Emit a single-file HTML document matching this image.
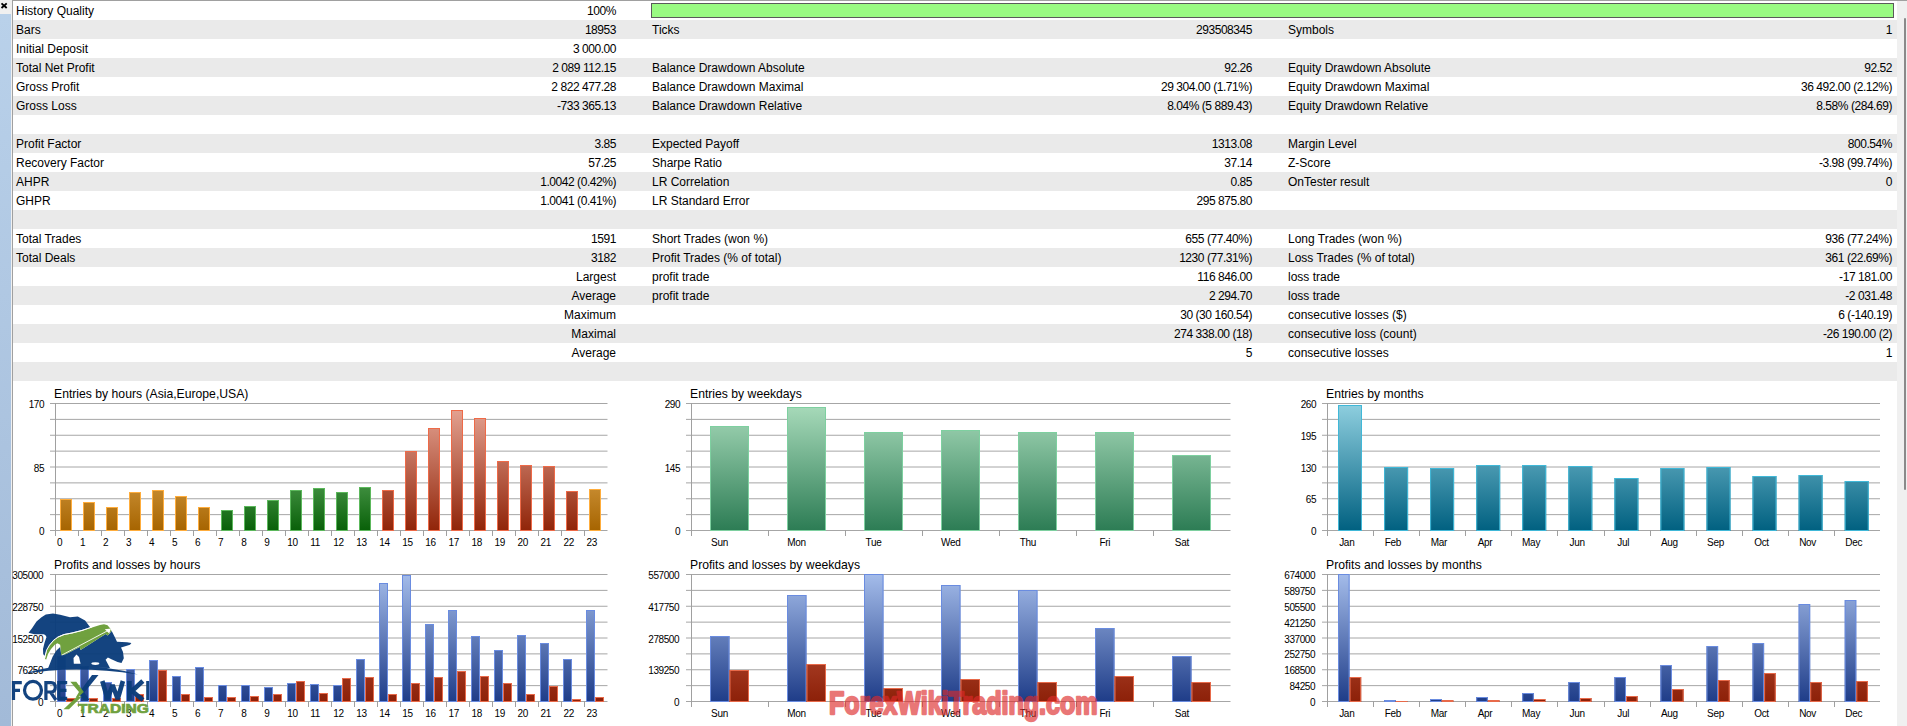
<!DOCTYPE html>
<html><head><meta charset="utf-8">
<style>
html,body{margin:0;padding:0;}
body{width:1907px;height:726px;overflow:hidden;position:relative;background:#f0f0f0;font-family:"Liberation Sans", sans-serif;}
.a{position:absolute;}
.r{position:absolute;left:13px;width:1884px;height:19px;}
.t{position:absolute;font-size:12px;line-height:19px;top:1px;white-space:nowrap;color:#000;}
.v{text-align:right;letter-spacing:-0.45px;}
</style></head><body>

<div class="a" style="left:0;top:14px;width:11px;height:712px;background:linear-gradient(#b9d1ea,#a2bad8)"></div>
<svg class="a" style="left:0;top:0" width="11" height="14"><path d="M1.5 3.4 L6.7 8 M6.7 3.4 L1.5 8" stroke="#000" stroke-width="1.9"/></svg>
<div class="a" style="left:12px;top:0;width:1895px;height:1px;background:#a0a0a0"></div>
<div class="a" style="left:12px;top:0;width:1px;height:726px;background:#a0a0a0"></div>
<div class="a" style="left:13px;top:1px;width:1884px;height:725px;background:#fff"></div>
<div class="a" style="left:1904px;top:18px;width:2px;height:472px;background:#8a8a8a;border-radius:1px"></div>
<div class="r" style="top:1px;background:#fff">
<span class="t" style="left:3px">History Quality</span>
<span class="t v" style="right:1281px">100%</span>
</div>
<div class="r" style="top:20px;background:#eaeaea">
<span class="t" style="left:3px">Bars</span>
<span class="t v" style="right:1281px">18953</span>
<span class="t" style="left:639px">Ticks</span>
<span class="t v" style="right:645px">293508345</span>
<span class="t" style="left:1275px">Symbols</span>
<span class="t v" style="right:5px">1</span>
</div>
<div class="r" style="top:39px;background:#fff">
<span class="t" style="left:3px">Initial Deposit</span>
<span class="t v" style="right:1281px">3 000.00</span>
</div>
<div class="r" style="top:58px;background:#eaeaea">
<span class="t" style="left:3px">Total Net Profit</span>
<span class="t v" style="right:1281px">2 089 112.15</span>
<span class="t" style="left:639px">Balance Drawdown Absolute</span>
<span class="t v" style="right:645px">92.26</span>
<span class="t" style="left:1275px">Equity Drawdown Absolute</span>
<span class="t v" style="right:5px">92.52</span>
</div>
<div class="r" style="top:77px;background:#fff">
<span class="t" style="left:3px">Gross Profit</span>
<span class="t v" style="right:1281px">2 822 477.28</span>
<span class="t" style="left:639px">Balance Drawdown Maximal</span>
<span class="t v" style="right:645px">29 304.00 (1.71%)</span>
<span class="t" style="left:1275px">Equity Drawdown Maximal</span>
<span class="t v" style="right:5px">36 492.00 (2.12%)</span>
</div>
<div class="r" style="top:96px;background:#eaeaea">
<span class="t" style="left:3px">Gross Loss</span>
<span class="t v" style="right:1281px">-733 365.13</span>
<span class="t" style="left:639px">Balance Drawdown Relative</span>
<span class="t v" style="right:645px">8.04% (5 889.43)</span>
<span class="t" style="left:1275px">Equity Drawdown Relative</span>
<span class="t v" style="right:5px">8.58% (284.69)</span>
</div>
<div class="r" style="top:115px;background:#fff">
</div>
<div class="r" style="top:134px;background:#eaeaea">
<span class="t" style="left:3px">Profit Factor</span>
<span class="t v" style="right:1281px">3.85</span>
<span class="t" style="left:639px">Expected Payoff</span>
<span class="t v" style="right:645px">1313.08</span>
<span class="t" style="left:1275px">Margin Level</span>
<span class="t v" style="right:5px">800.54%</span>
</div>
<div class="r" style="top:153px;background:#fff">
<span class="t" style="left:3px">Recovery Factor</span>
<span class="t v" style="right:1281px">57.25</span>
<span class="t" style="left:639px">Sharpe Ratio</span>
<span class="t v" style="right:645px">37.14</span>
<span class="t" style="left:1275px">Z-Score</span>
<span class="t v" style="right:5px">-3.98 (99.74%)</span>
</div>
<div class="r" style="top:172px;background:#eaeaea">
<span class="t" style="left:3px">AHPR</span>
<span class="t v" style="right:1281px">1.0042 (0.42%)</span>
<span class="t" style="left:639px">LR Correlation</span>
<span class="t v" style="right:645px">0.85</span>
<span class="t" style="left:1275px">OnTester result</span>
<span class="t v" style="right:5px">0</span>
</div>
<div class="r" style="top:191px;background:#fff">
<span class="t" style="left:3px">GHPR</span>
<span class="t v" style="right:1281px">1.0041 (0.41%)</span>
<span class="t" style="left:639px">LR Standard Error</span>
<span class="t v" style="right:645px">295 875.80</span>
</div>
<div class="r" style="top:210px;background:#eaeaea">
</div>
<div class="r" style="top:229px;background:#fff">
<span class="t" style="left:3px">Total Trades</span>
<span class="t v" style="right:1281px">1591</span>
<span class="t" style="left:639px">Short Trades (won %)</span>
<span class="t v" style="right:645px">655 (77.40%)</span>
<span class="t" style="left:1275px">Long Trades (won %)</span>
<span class="t v" style="right:5px">936 (77.24%)</span>
</div>
<div class="r" style="top:248px;background:#eaeaea">
<span class="t" style="left:3px">Total Deals</span>
<span class="t v" style="right:1281px">3182</span>
<span class="t" style="left:639px">Profit Trades (% of total)</span>
<span class="t v" style="right:645px">1230 (77.31%)</span>
<span class="t" style="left:1275px">Loss Trades (% of total)</span>
<span class="t v" style="right:5px">361 (22.69%)</span>
</div>
<div class="r" style="top:267px;background:#fff">
<span class="t v" style="right:1281px;letter-spacing:0">Largest</span>
<span class="t" style="left:639px">profit trade</span>
<span class="t v" style="right:645px">116 846.00</span>
<span class="t" style="left:1275px">loss trade</span>
<span class="t v" style="right:5px">-17 181.00</span>
</div>
<div class="r" style="top:286px;background:#eaeaea">
<span class="t v" style="right:1281px;letter-spacing:0">Average</span>
<span class="t" style="left:639px">profit trade</span>
<span class="t v" style="right:645px">2 294.70</span>
<span class="t" style="left:1275px">loss trade</span>
<span class="t v" style="right:5px">-2 031.48</span>
</div>
<div class="r" style="top:305px;background:#fff">
<span class="t v" style="right:1281px;letter-spacing:0">Maximum</span>
<span class="t v" style="right:645px">30 (30 160.54)</span>
<span class="t" style="left:1275px">consecutive losses ($)</span>
<span class="t v" style="right:5px">6 (-140.19)</span>
</div>
<div class="r" style="top:324px;background:#eaeaea">
<span class="t v" style="right:1281px;letter-spacing:0">Maximal</span>
<span class="t v" style="right:645px">274 338.00 (18)</span>
<span class="t" style="left:1275px">consecutive loss (count)</span>
<span class="t v" style="right:5px">-26 190.00 (2)</span>
</div>
<div class="r" style="top:343px;background:#fff">
<span class="t v" style="right:1281px;letter-spacing:0">Average</span>
<span class="t v" style="right:645px">5</span>
<span class="t" style="left:1275px">consecutive losses</span>
<span class="t v" style="right:5px">1</span>
</div>
<div class="r" style="top:362px;background:#eaeaea">
</div>
<div class="a" style="left:651px;top:3px;width:1241px;height:13px;background:#99fa82;border:1px solid #5a5a5a"></div>
<svg class="a" style="left:0;top:0" width="1907" height="726">
<defs>
<linearGradient id="gOr" gradientUnits="userSpaceOnUse" x1="0" y1="403" x2="0" y2="531"><stop offset="0" stop-color="#e0a860"/><stop offset="0.68" stop-color="#c4882c"/><stop offset="1" stop-color="#a66400"/></linearGradient>
<linearGradient id="gGr" gradientUnits="userSpaceOnUse" x1="0" y1="403" x2="0" y2="531"><stop offset="0" stop-color="#70b070"/><stop offset="0.68" stop-color="#3a8a3a"/><stop offset="1" stop-color="#086008"/></linearGradient>
<linearGradient id="gRd" gradientUnits="userSpaceOnUse" x1="0" y1="403" x2="0" y2="531"><stop offset="0" stop-color="#e8a898"/><stop offset="1" stop-color="#902408"/></linearGradient>
<linearGradient id="gTl" gradientUnits="userSpaceOnUse" x1="0" y1="403" x2="0" y2="531"><stop offset="0" stop-color="#aadcbc"/><stop offset="1" stop-color="#2c7c54"/></linearGradient>
<linearGradient id="gCy" gradientUnits="userSpaceOnUse" x1="0" y1="403" x2="0" y2="531"><stop offset="0" stop-color="#90d0e0"/><stop offset="1" stop-color="#006080"/></linearGradient>
<linearGradient id="gBl" gradientUnits="userSpaceOnUse" x1="0" y1="574" x2="0" y2="702"><stop offset="0" stop-color="#a4bcea"/><stop offset="1" stop-color="#1e3c88"/></linearGradient>
<linearGradient id="gRe" gradientUnits="userSpaceOnUse" x1="0" y1="574" x2="0" y2="702"><stop offset="0" stop-color="#d87058"/><stop offset="1" stop-color="#8c2008"/></linearGradient>
</defs>
<style>.yl{font:10px "Liberation Sans", sans-serif;letter-spacing:-0.45px;fill:#000} .xl{font:10px "Liberation Sans", sans-serif;letter-spacing:-0.3px;fill:#000} .ti{font:12.2px "Liberation Sans", sans-serif;fill:#000}</style>
<line x1="50" y1="403.5" x2="607.5" y2="403.5" stroke="#a6a6a6" stroke-width="1"/>
<line x1="50" y1="419.375" x2="607.5" y2="419.375" stroke="#a6a6a6" stroke-width="1"/>
<line x1="50" y1="435.25" x2="607.5" y2="435.25" stroke="#a6a6a6" stroke-width="1"/>
<line x1="50" y1="451.125" x2="607.5" y2="451.125" stroke="#a6a6a6" stroke-width="1"/>
<line x1="50" y1="467.0" x2="607.5" y2="467.0" stroke="#a6a6a6" stroke-width="1"/>
<line x1="50" y1="482.875" x2="607.5" y2="482.875" stroke="#a6a6a6" stroke-width="1"/>
<line x1="50" y1="498.75" x2="607.5" y2="498.75" stroke="#a6a6a6" stroke-width="1"/>
<line x1="50" y1="514.625" x2="607.5" y2="514.625" stroke="#a6a6a6" stroke-width="1"/>
<line x1="50" y1="530.5" x2="607.5" y2="530.5" stroke="#a6a6a6" stroke-width="1"/>
<line x1="55.5" y1="403" x2="55.5" y2="536" stroke="#a0a0a0" stroke-width="1"/>
<line x1="55.5" y1="530" x2="55.5" y2="536" stroke="#a0a0a0" stroke-width="1"/>
<line x1="78.5" y1="530" x2="78.5" y2="536" stroke="#a0a0a0" stroke-width="1"/>
<line x1="101.5" y1="530" x2="101.5" y2="536" stroke="#a0a0a0" stroke-width="1"/>
<line x1="124.5" y1="530" x2="124.5" y2="536" stroke="#a0a0a0" stroke-width="1"/>
<line x1="147.5" y1="530" x2="147.5" y2="536" stroke="#a0a0a0" stroke-width="1"/>
<line x1="170.5" y1="530" x2="170.5" y2="536" stroke="#a0a0a0" stroke-width="1"/>
<line x1="193.5" y1="530" x2="193.5" y2="536" stroke="#a0a0a0" stroke-width="1"/>
<line x1="216.5" y1="530" x2="216.5" y2="536" stroke="#a0a0a0" stroke-width="1"/>
<line x1="239.5" y1="530" x2="239.5" y2="536" stroke="#a0a0a0" stroke-width="1"/>
<line x1="262.5" y1="530" x2="262.5" y2="536" stroke="#a0a0a0" stroke-width="1"/>
<line x1="285.5" y1="530" x2="285.5" y2="536" stroke="#a0a0a0" stroke-width="1"/>
<line x1="308.5" y1="530" x2="308.5" y2="536" stroke="#a0a0a0" stroke-width="1"/>
<line x1="331.5" y1="530" x2="331.5" y2="536" stroke="#a0a0a0" stroke-width="1"/>
<line x1="354.5" y1="530" x2="354.5" y2="536" stroke="#a0a0a0" stroke-width="1"/>
<line x1="377.5" y1="530" x2="377.5" y2="536" stroke="#a0a0a0" stroke-width="1"/>
<line x1="400.5" y1="530" x2="400.5" y2="536" stroke="#a0a0a0" stroke-width="1"/>
<line x1="423.5" y1="530" x2="423.5" y2="536" stroke="#a0a0a0" stroke-width="1"/>
<line x1="446.5" y1="530" x2="446.5" y2="536" stroke="#a0a0a0" stroke-width="1"/>
<line x1="469.5" y1="530" x2="469.5" y2="536" stroke="#a0a0a0" stroke-width="1"/>
<line x1="492.5" y1="530" x2="492.5" y2="536" stroke="#a0a0a0" stroke-width="1"/>
<line x1="515.5" y1="530" x2="515.5" y2="536" stroke="#a0a0a0" stroke-width="1"/>
<line x1="538.5" y1="530" x2="538.5" y2="536" stroke="#a0a0a0" stroke-width="1"/>
<line x1="561.5" y1="530" x2="561.5" y2="536" stroke="#a0a0a0" stroke-width="1"/>
<line x1="584.5" y1="530" x2="584.5" y2="536" stroke="#a0a0a0" stroke-width="1"/>
<text x="44" y="408" text-anchor="end" class="yl">170</text>
<text x="44" y="472" text-anchor="end" class="yl">85</text>
<text x="44" y="535" text-anchor="end" class="yl">0</text>
<text x="57.0" y="546" class="xl">0</text>
<text x="80.0" y="546" class="xl">1</text>
<text x="103.0" y="546" class="xl">2</text>
<text x="126.1" y="546" class="xl">3</text>
<text x="149.1" y="546" class="xl">4</text>
<text x="172.1" y="546" class="xl">5</text>
<text x="195.1" y="546" class="xl">6</text>
<text x="218.1" y="546" class="xl">7</text>
<text x="241.2" y="546" class="xl">8</text>
<text x="264.2" y="546" class="xl">9</text>
<text x="287.2" y="546" class="xl">10</text>
<text x="310.2" y="546" class="xl">11</text>
<text x="333.2" y="546" class="xl">12</text>
<text x="356.3" y="546" class="xl">13</text>
<text x="379.3" y="546" class="xl">14</text>
<text x="402.3" y="546" class="xl">15</text>
<text x="425.3" y="546" class="xl">16</text>
<text x="448.4" y="546" class="xl">17</text>
<text x="471.4" y="546" class="xl">18</text>
<text x="494.4" y="546" class="xl">19</text>
<text x="517.4" y="546" class="xl">20</text>
<text x="540.4" y="546" class="xl">21</text>
<text x="563.5" y="546" class="xl">22</text>
<text x="586.5" y="546" class="xl">23</text>
<text x="54" y="398" class="ti">Entries by hours (Asia,Europe,USA)</text>
<rect x="60.0" y="499" width="12" height="32" fill="url(#gOr)"/>
<rect x="60.5" y="499.5" width="11" height="31" fill="none" stroke="#ffad3c" stroke-width="1"/>
<rect x="83.0" y="502" width="12" height="29" fill="url(#gOr)"/>
<rect x="83.5" y="502.5" width="11" height="28" fill="none" stroke="#ffad3c" stroke-width="1"/>
<rect x="106.0" y="507" width="12" height="24" fill="url(#gOr)"/>
<rect x="106.5" y="507.5" width="11" height="23" fill="none" stroke="#ffad3c" stroke-width="1"/>
<rect x="129.0" y="492" width="12" height="39" fill="url(#gOr)"/>
<rect x="129.5" y="492.5" width="11" height="38" fill="none" stroke="#ffad3c" stroke-width="1"/>
<rect x="152.0" y="490" width="12" height="41" fill="url(#gOr)"/>
<rect x="152.5" y="490.5" width="11" height="40" fill="none" stroke="#ffad3c" stroke-width="1"/>
<rect x="175.0" y="496" width="12" height="35" fill="url(#gOr)"/>
<rect x="175.5" y="496.5" width="11" height="34" fill="none" stroke="#ffad3c" stroke-width="1"/>
<rect x="198.0" y="507" width="12" height="24" fill="url(#gOr)"/>
<rect x="198.5" y="507.5" width="11" height="23" fill="none" stroke="#ffad3c" stroke-width="1"/>
<rect x="221.0" y="510" width="12" height="21" fill="url(#gGr)"/>
<rect x="221.5" y="510.5" width="11" height="20" fill="none" stroke="#5cb85c" stroke-width="1"/>
<rect x="244.0" y="506" width="12" height="25" fill="url(#gGr)"/>
<rect x="244.5" y="506.5" width="11" height="24" fill="none" stroke="#5cb85c" stroke-width="1"/>
<rect x="267.0" y="500" width="12" height="31" fill="url(#gGr)"/>
<rect x="267.5" y="500.5" width="11" height="30" fill="none" stroke="#5cb85c" stroke-width="1"/>
<rect x="290.0" y="490" width="12" height="41" fill="url(#gGr)"/>
<rect x="290.5" y="490.5" width="11" height="40" fill="none" stroke="#5cb85c" stroke-width="1"/>
<rect x="313.0" y="488" width="12" height="43" fill="url(#gGr)"/>
<rect x="313.5" y="488.5" width="11" height="42" fill="none" stroke="#5cb85c" stroke-width="1"/>
<rect x="336.0" y="492" width="12" height="39" fill="url(#gGr)"/>
<rect x="336.5" y="492.5" width="11" height="38" fill="none" stroke="#5cb85c" stroke-width="1"/>
<rect x="359.0" y="487" width="12" height="44" fill="url(#gGr)"/>
<rect x="359.5" y="487.5" width="11" height="43" fill="none" stroke="#5cb85c" stroke-width="1"/>
<rect x="382.0" y="490" width="12" height="41" fill="url(#gRd)"/>
<rect x="382.5" y="490.5" width="11" height="40" fill="none" stroke="#ee6a48" stroke-width="1"/>
<rect x="405.0" y="451" width="12" height="80" fill="url(#gRd)"/>
<rect x="405.5" y="451.5" width="11" height="79" fill="none" stroke="#ee6a48" stroke-width="1"/>
<rect x="428.0" y="428" width="12" height="103" fill="url(#gRd)"/>
<rect x="428.5" y="428.5" width="11" height="102" fill="none" stroke="#ee6a48" stroke-width="1"/>
<rect x="451.0" y="410" width="12" height="121" fill="url(#gRd)"/>
<rect x="451.5" y="410.5" width="11" height="120" fill="none" stroke="#ee6a48" stroke-width="1"/>
<rect x="474.0" y="418" width="12" height="113" fill="url(#gRd)"/>
<rect x="474.5" y="418.5" width="11" height="112" fill="none" stroke="#ee6a48" stroke-width="1"/>
<rect x="497.0" y="461" width="12" height="70" fill="url(#gRd)"/>
<rect x="497.5" y="461.5" width="11" height="69" fill="none" stroke="#ee6a48" stroke-width="1"/>
<rect x="520.0" y="465" width="12" height="66" fill="url(#gRd)"/>
<rect x="520.5" y="465.5" width="11" height="65" fill="none" stroke="#ee6a48" stroke-width="1"/>
<rect x="543.0" y="466" width="12" height="65" fill="url(#gRd)"/>
<rect x="543.5" y="466.5" width="11" height="64" fill="none" stroke="#ee6a48" stroke-width="1"/>
<rect x="566.0" y="491" width="12" height="40" fill="url(#gRd)"/>
<rect x="566.5" y="491.5" width="11" height="39" fill="none" stroke="#ee6a48" stroke-width="1"/>
<rect x="589.0" y="489" width="12" height="42" fill="url(#gOr)"/>
<rect x="589.5" y="489.5" width="11" height="41" fill="none" stroke="#ffad3c" stroke-width="1"/>
<line x1="686" y1="403.5" x2="1230.5" y2="403.5" stroke="#a6a6a6" stroke-width="1"/>
<line x1="686" y1="419.375" x2="1230.5" y2="419.375" stroke="#a6a6a6" stroke-width="1"/>
<line x1="686" y1="435.25" x2="1230.5" y2="435.25" stroke="#a6a6a6" stroke-width="1"/>
<line x1="686" y1="451.125" x2="1230.5" y2="451.125" stroke="#a6a6a6" stroke-width="1"/>
<line x1="686" y1="467.0" x2="1230.5" y2="467.0" stroke="#a6a6a6" stroke-width="1"/>
<line x1="686" y1="482.875" x2="1230.5" y2="482.875" stroke="#a6a6a6" stroke-width="1"/>
<line x1="686" y1="498.75" x2="1230.5" y2="498.75" stroke="#a6a6a6" stroke-width="1"/>
<line x1="686" y1="514.625" x2="1230.5" y2="514.625" stroke="#a6a6a6" stroke-width="1"/>
<line x1="686" y1="530.5" x2="1230.5" y2="530.5" stroke="#a6a6a6" stroke-width="1"/>
<line x1="691.5" y1="403" x2="691.5" y2="536" stroke="#a0a0a0" stroke-width="1"/>
<line x1="691.5" y1="530" x2="691.5" y2="536" stroke="#a0a0a0" stroke-width="1"/>
<line x1="768.5" y1="530" x2="768.5" y2="536" stroke="#a0a0a0" stroke-width="1"/>
<line x1="845.5" y1="530" x2="845.5" y2="536" stroke="#a0a0a0" stroke-width="1"/>
<line x1="922.5" y1="530" x2="922.5" y2="536" stroke="#a0a0a0" stroke-width="1"/>
<line x1="999.5" y1="530" x2="999.5" y2="536" stroke="#a0a0a0" stroke-width="1"/>
<line x1="1076.5" y1="530" x2="1076.5" y2="536" stroke="#a0a0a0" stroke-width="1"/>
<line x1="1153.5" y1="530" x2="1153.5" y2="536" stroke="#a0a0a0" stroke-width="1"/>
<text x="680" y="408" text-anchor="end" class="yl">290</text>
<text x="680" y="472" text-anchor="end" class="yl">145</text>
<text x="680" y="535" text-anchor="end" class="yl">0</text>
<text x="719.5" y="546" text-anchor="middle" class="xl">Sun</text>
<text x="796.6" y="546" text-anchor="middle" class="xl">Mon</text>
<text x="873.6" y="546" text-anchor="middle" class="xl">Tue</text>
<text x="950.7" y="546" text-anchor="middle" class="xl">Wed</text>
<text x="1027.8" y="546" text-anchor="middle" class="xl">Thu</text>
<text x="1104.9" y="546" text-anchor="middle" class="xl">Fri</text>
<text x="1181.9" y="546" text-anchor="middle" class="xl">Sat</text>
<text x="690" y="398" class="ti">Entries by weekdays</text>
<rect x="710.0" y="426" width="39" height="105" fill="url(#gTl)"/>
<rect x="710.5" y="426.5" width="38" height="104" fill="none" stroke="#7ed0a0" stroke-width="1"/>
<rect x="787.0" y="407" width="39" height="124" fill="url(#gTl)"/>
<rect x="787.5" y="407.5" width="38" height="123" fill="none" stroke="#7ed0a0" stroke-width="1"/>
<rect x="864.0" y="432" width="39" height="99" fill="url(#gTl)"/>
<rect x="864.5" y="432.5" width="38" height="98" fill="none" stroke="#7ed0a0" stroke-width="1"/>
<rect x="941.0" y="430" width="39" height="101" fill="url(#gTl)"/>
<rect x="941.5" y="430.5" width="38" height="100" fill="none" stroke="#7ed0a0" stroke-width="1"/>
<rect x="1018.0" y="432" width="39" height="99" fill="url(#gTl)"/>
<rect x="1018.5" y="432.5" width="38" height="98" fill="none" stroke="#7ed0a0" stroke-width="1"/>
<rect x="1095.0" y="432" width="39" height="99" fill="url(#gTl)"/>
<rect x="1095.5" y="432.5" width="38" height="98" fill="none" stroke="#7ed0a0" stroke-width="1"/>
<rect x="1172.0" y="455" width="39" height="76" fill="url(#gTl)"/>
<rect x="1172.5" y="455.5" width="38" height="75" fill="none" stroke="#7ed0a0" stroke-width="1"/>
<line x1="1322" y1="403.5" x2="1880" y2="403.5" stroke="#a6a6a6" stroke-width="1"/>
<line x1="1322" y1="419.375" x2="1880" y2="419.375" stroke="#a6a6a6" stroke-width="1"/>
<line x1="1322" y1="435.25" x2="1880" y2="435.25" stroke="#a6a6a6" stroke-width="1"/>
<line x1="1322" y1="451.125" x2="1880" y2="451.125" stroke="#a6a6a6" stroke-width="1"/>
<line x1="1322" y1="467.0" x2="1880" y2="467.0" stroke="#a6a6a6" stroke-width="1"/>
<line x1="1322" y1="482.875" x2="1880" y2="482.875" stroke="#a6a6a6" stroke-width="1"/>
<line x1="1322" y1="498.75" x2="1880" y2="498.75" stroke="#a6a6a6" stroke-width="1"/>
<line x1="1322" y1="514.625" x2="1880" y2="514.625" stroke="#a6a6a6" stroke-width="1"/>
<line x1="1322" y1="530.5" x2="1880" y2="530.5" stroke="#a6a6a6" stroke-width="1"/>
<line x1="1327.5" y1="403" x2="1327.5" y2="536" stroke="#a0a0a0" stroke-width="1"/>
<line x1="1327.5" y1="530" x2="1327.5" y2="536" stroke="#a0a0a0" stroke-width="1"/>
<line x1="1373.5" y1="530" x2="1373.5" y2="536" stroke="#a0a0a0" stroke-width="1"/>
<line x1="1419.5" y1="530" x2="1419.5" y2="536" stroke="#a0a0a0" stroke-width="1"/>
<line x1="1465.5" y1="530" x2="1465.5" y2="536" stroke="#a0a0a0" stroke-width="1"/>
<line x1="1511.5" y1="530" x2="1511.5" y2="536" stroke="#a0a0a0" stroke-width="1"/>
<line x1="1557.5" y1="530" x2="1557.5" y2="536" stroke="#a0a0a0" stroke-width="1"/>
<line x1="1604.5" y1="530" x2="1604.5" y2="536" stroke="#a0a0a0" stroke-width="1"/>
<line x1="1650.5" y1="530" x2="1650.5" y2="536" stroke="#a0a0a0" stroke-width="1"/>
<line x1="1696.5" y1="530" x2="1696.5" y2="536" stroke="#a0a0a0" stroke-width="1"/>
<line x1="1742.5" y1="530" x2="1742.5" y2="536" stroke="#a0a0a0" stroke-width="1"/>
<line x1="1788.5" y1="530" x2="1788.5" y2="536" stroke="#a0a0a0" stroke-width="1"/>
<line x1="1834.5" y1="530" x2="1834.5" y2="536" stroke="#a0a0a0" stroke-width="1"/>
<text x="1316" y="408" text-anchor="end" class="yl">260</text>
<text x="1316" y="440" text-anchor="end" class="yl">195</text>
<text x="1316" y="472" text-anchor="end" class="yl">130</text>
<text x="1316" y="503" text-anchor="end" class="yl">65</text>
<text x="1316" y="535" text-anchor="end" class="yl">0</text>
<text x="1346.8" y="546" text-anchor="middle" class="xl">Jan</text>
<text x="1392.9" y="546" text-anchor="middle" class="xl">Feb</text>
<text x="1439.0" y="546" text-anchor="middle" class="xl">Mar</text>
<text x="1485.0" y="546" text-anchor="middle" class="xl">Apr</text>
<text x="1531.1" y="546" text-anchor="middle" class="xl">May</text>
<text x="1577.2" y="546" text-anchor="middle" class="xl">Jun</text>
<text x="1623.3" y="546" text-anchor="middle" class="xl">Jul</text>
<text x="1669.4" y="546" text-anchor="middle" class="xl">Aug</text>
<text x="1715.5" y="546" text-anchor="middle" class="xl">Sep</text>
<text x="1761.5" y="546" text-anchor="middle" class="xl">Oct</text>
<text x="1807.6" y="546" text-anchor="middle" class="xl">Nov</text>
<text x="1853.7" y="546" text-anchor="middle" class="xl">Dec</text>
<text x="1326" y="398" class="ti">Entries by months</text>
<rect x="1338.0" y="405" width="24" height="126" fill="url(#gCy)"/>
<rect x="1338.5" y="405.5" width="23" height="125" fill="none" stroke="#40b8d8" stroke-width="1"/>
<rect x="1384.1" y="467" width="24" height="64" fill="url(#gCy)"/>
<rect x="1384.6" y="467.5" width="23" height="63" fill="none" stroke="#40b8d8" stroke-width="1"/>
<rect x="1430.1" y="468" width="24" height="63" fill="url(#gCy)"/>
<rect x="1430.6" y="468.5" width="23" height="62" fill="none" stroke="#40b8d8" stroke-width="1"/>
<rect x="1476.2" y="465" width="24" height="66" fill="url(#gCy)"/>
<rect x="1476.7" y="465.5" width="23" height="65" fill="none" stroke="#40b8d8" stroke-width="1"/>
<rect x="1522.2" y="465" width="24" height="66" fill="url(#gCy)"/>
<rect x="1522.7" y="465.5" width="23" height="65" fill="none" stroke="#40b8d8" stroke-width="1"/>
<rect x="1568.3" y="466" width="24" height="65" fill="url(#gCy)"/>
<rect x="1568.8" y="466.5" width="23" height="64" fill="none" stroke="#40b8d8" stroke-width="1"/>
<rect x="1614.4" y="478" width="24" height="53" fill="url(#gCy)"/>
<rect x="1614.9" y="478.5" width="23" height="52" fill="none" stroke="#40b8d8" stroke-width="1"/>
<rect x="1660.4" y="468" width="24" height="63" fill="url(#gCy)"/>
<rect x="1660.9" y="468.5" width="23" height="62" fill="none" stroke="#40b8d8" stroke-width="1"/>
<rect x="1706.5" y="467" width="24" height="64" fill="url(#gCy)"/>
<rect x="1707.0" y="467.5" width="23" height="63" fill="none" stroke="#40b8d8" stroke-width="1"/>
<rect x="1752.5" y="476" width="24" height="55" fill="url(#gCy)"/>
<rect x="1753.0" y="476.5" width="23" height="54" fill="none" stroke="#40b8d8" stroke-width="1"/>
<rect x="1798.6" y="475" width="24" height="56" fill="url(#gCy)"/>
<rect x="1799.1" y="475.5" width="23" height="55" fill="none" stroke="#40b8d8" stroke-width="1"/>
<rect x="1844.7" y="481" width="24" height="50" fill="url(#gCy)"/>
<rect x="1845.2" y="481.5" width="23" height="49" fill="none" stroke="#40b8d8" stroke-width="1"/>
<line x1="50" y1="574.5" x2="607.5" y2="574.5" stroke="#a6a6a6" stroke-width="1"/>
<line x1="50" y1="590.375" x2="607.5" y2="590.375" stroke="#a6a6a6" stroke-width="1"/>
<line x1="50" y1="606.25" x2="607.5" y2="606.25" stroke="#a6a6a6" stroke-width="1"/>
<line x1="50" y1="622.125" x2="607.5" y2="622.125" stroke="#a6a6a6" stroke-width="1"/>
<line x1="50" y1="638.0" x2="607.5" y2="638.0" stroke="#a6a6a6" stroke-width="1"/>
<line x1="50" y1="653.875" x2="607.5" y2="653.875" stroke="#a6a6a6" stroke-width="1"/>
<line x1="50" y1="669.75" x2="607.5" y2="669.75" stroke="#a6a6a6" stroke-width="1"/>
<line x1="50" y1="685.625" x2="607.5" y2="685.625" stroke="#a6a6a6" stroke-width="1"/>
<line x1="50" y1="701.5" x2="607.5" y2="701.5" stroke="#a6a6a6" stroke-width="1"/>
<line x1="55.5" y1="574" x2="55.5" y2="707" stroke="#a0a0a0" stroke-width="1"/>
<line x1="55.5" y1="701" x2="55.5" y2="707" stroke="#a0a0a0" stroke-width="1"/>
<line x1="78.5" y1="701" x2="78.5" y2="707" stroke="#a0a0a0" stroke-width="1"/>
<line x1="101.5" y1="701" x2="101.5" y2="707" stroke="#a0a0a0" stroke-width="1"/>
<line x1="124.5" y1="701" x2="124.5" y2="707" stroke="#a0a0a0" stroke-width="1"/>
<line x1="147.5" y1="701" x2="147.5" y2="707" stroke="#a0a0a0" stroke-width="1"/>
<line x1="170.5" y1="701" x2="170.5" y2="707" stroke="#a0a0a0" stroke-width="1"/>
<line x1="193.5" y1="701" x2="193.5" y2="707" stroke="#a0a0a0" stroke-width="1"/>
<line x1="216.5" y1="701" x2="216.5" y2="707" stroke="#a0a0a0" stroke-width="1"/>
<line x1="239.5" y1="701" x2="239.5" y2="707" stroke="#a0a0a0" stroke-width="1"/>
<line x1="262.5" y1="701" x2="262.5" y2="707" stroke="#a0a0a0" stroke-width="1"/>
<line x1="285.5" y1="701" x2="285.5" y2="707" stroke="#a0a0a0" stroke-width="1"/>
<line x1="308.5" y1="701" x2="308.5" y2="707" stroke="#a0a0a0" stroke-width="1"/>
<line x1="331.5" y1="701" x2="331.5" y2="707" stroke="#a0a0a0" stroke-width="1"/>
<line x1="354.5" y1="701" x2="354.5" y2="707" stroke="#a0a0a0" stroke-width="1"/>
<line x1="377.5" y1="701" x2="377.5" y2="707" stroke="#a0a0a0" stroke-width="1"/>
<line x1="400.5" y1="701" x2="400.5" y2="707" stroke="#a0a0a0" stroke-width="1"/>
<line x1="423.5" y1="701" x2="423.5" y2="707" stroke="#a0a0a0" stroke-width="1"/>
<line x1="446.5" y1="701" x2="446.5" y2="707" stroke="#a0a0a0" stroke-width="1"/>
<line x1="469.5" y1="701" x2="469.5" y2="707" stroke="#a0a0a0" stroke-width="1"/>
<line x1="492.5" y1="701" x2="492.5" y2="707" stroke="#a0a0a0" stroke-width="1"/>
<line x1="515.5" y1="701" x2="515.5" y2="707" stroke="#a0a0a0" stroke-width="1"/>
<line x1="538.5" y1="701" x2="538.5" y2="707" stroke="#a0a0a0" stroke-width="1"/>
<line x1="561.5" y1="701" x2="561.5" y2="707" stroke="#a0a0a0" stroke-width="1"/>
<line x1="584.5" y1="701" x2="584.5" y2="707" stroke="#a0a0a0" stroke-width="1"/>
<text x="43" y="579" text-anchor="end" class="yl">305000</text>
<text x="43" y="611" text-anchor="end" class="yl">228750</text>
<text x="43" y="643" text-anchor="end" class="yl">152500</text>
<text x="43" y="674" text-anchor="end" class="yl">76250</text>
<text x="43" y="706" text-anchor="end" class="yl">0</text>
<text x="57.0" y="717" class="xl">0</text>
<text x="80.0" y="717" class="xl">1</text>
<text x="103.0" y="717" class="xl">2</text>
<text x="126.1" y="717" class="xl">3</text>
<text x="149.1" y="717" class="xl">4</text>
<text x="172.1" y="717" class="xl">5</text>
<text x="195.1" y="717" class="xl">6</text>
<text x="218.1" y="717" class="xl">7</text>
<text x="241.2" y="717" class="xl">8</text>
<text x="264.2" y="717" class="xl">9</text>
<text x="287.2" y="717" class="xl">10</text>
<text x="310.2" y="717" class="xl">11</text>
<text x="333.2" y="717" class="xl">12</text>
<text x="356.3" y="717" class="xl">13</text>
<text x="379.3" y="717" class="xl">14</text>
<text x="402.3" y="717" class="xl">15</text>
<text x="425.3" y="717" class="xl">16</text>
<text x="448.4" y="717" class="xl">17</text>
<text x="471.4" y="717" class="xl">18</text>
<text x="494.4" y="717" class="xl">19</text>
<text x="517.4" y="717" class="xl">20</text>
<text x="540.4" y="717" class="xl">21</text>
<text x="563.5" y="717" class="xl">22</text>
<text x="586.5" y="717" class="xl">23</text>
<text x="54" y="569" class="ti">Profits and losses by hours</text>
<rect x="57.0" y="656" width="9" height="46" fill="url(#gBl)"/>
<rect x="57.5" y="656.5" width="8" height="45" fill="none" stroke="#6a8ce0" stroke-width="1"/>
<rect x="66.0" y="698" width="9" height="4" fill="url(#gRe)"/>
<rect x="66.5" y="698.5" width="8" height="3" fill="none" stroke="#e86a4a" stroke-width="1"/>
<rect x="80.0" y="666" width="9" height="36" fill="url(#gBl)"/>
<rect x="80.5" y="666.5" width="8" height="35" fill="none" stroke="#6a8ce0" stroke-width="1"/>
<rect x="89.0" y="698" width="9" height="4" fill="url(#gRe)"/>
<rect x="89.5" y="698.5" width="8" height="3" fill="none" stroke="#e86a4a" stroke-width="1"/>
<rect x="103.0" y="682" width="9" height="20" fill="url(#gBl)"/>
<rect x="103.5" y="682.5" width="8" height="19" fill="none" stroke="#6a8ce0" stroke-width="1"/>
<rect x="112.0" y="698" width="9" height="4" fill="url(#gRe)"/>
<rect x="112.5" y="698.5" width="8" height="3" fill="none" stroke="#e86a4a" stroke-width="1"/>
<rect x="126.0" y="669" width="9" height="33" fill="url(#gBl)"/>
<rect x="126.5" y="669.5" width="8" height="32" fill="none" stroke="#6a8ce0" stroke-width="1"/>
<rect x="135.0" y="694" width="9" height="8" fill="url(#gRe)"/>
<rect x="135.5" y="694.5" width="8" height="7" fill="none" stroke="#e86a4a" stroke-width="1"/>
<rect x="149.0" y="660" width="9" height="42" fill="url(#gBl)"/>
<rect x="149.5" y="660.5" width="8" height="41" fill="none" stroke="#6a8ce0" stroke-width="1"/>
<rect x="158.0" y="670" width="9" height="32" fill="url(#gRe)"/>
<rect x="158.5" y="670.5" width="8" height="31" fill="none" stroke="#e86a4a" stroke-width="1"/>
<rect x="172.0" y="676" width="9" height="26" fill="url(#gBl)"/>
<rect x="172.5" y="676.5" width="8" height="25" fill="none" stroke="#6a8ce0" stroke-width="1"/>
<rect x="181.0" y="694" width="9" height="8" fill="url(#gRe)"/>
<rect x="181.5" y="694.5" width="8" height="7" fill="none" stroke="#e86a4a" stroke-width="1"/>
<rect x="195.0" y="667" width="9" height="35" fill="url(#gBl)"/>
<rect x="195.5" y="667.5" width="8" height="34" fill="none" stroke="#6a8ce0" stroke-width="1"/>
<rect x="204.0" y="697" width="9" height="5" fill="url(#gRe)"/>
<rect x="204.5" y="697.5" width="8" height="4" fill="none" stroke="#e86a4a" stroke-width="1"/>
<rect x="218.0" y="685" width="9" height="17" fill="url(#gBl)"/>
<rect x="218.5" y="685.5" width="8" height="16" fill="none" stroke="#6a8ce0" stroke-width="1"/>
<rect x="227.0" y="697" width="9" height="5" fill="url(#gRe)"/>
<rect x="227.5" y="697.5" width="8" height="4" fill="none" stroke="#e86a4a" stroke-width="1"/>
<rect x="241.0" y="685" width="9" height="17" fill="url(#gBl)"/>
<rect x="241.5" y="685.5" width="8" height="16" fill="none" stroke="#6a8ce0" stroke-width="1"/>
<rect x="250.0" y="696" width="9" height="6" fill="url(#gRe)"/>
<rect x="250.5" y="696.5" width="8" height="5" fill="none" stroke="#e86a4a" stroke-width="1"/>
<rect x="264.0" y="687" width="9" height="15" fill="url(#gBl)"/>
<rect x="264.5" y="687.5" width="8" height="14" fill="none" stroke="#6a8ce0" stroke-width="1"/>
<rect x="273.0" y="694" width="9" height="8" fill="url(#gRe)"/>
<rect x="273.5" y="694.5" width="8" height="7" fill="none" stroke="#e86a4a" stroke-width="1"/>
<rect x="287.0" y="683" width="9" height="19" fill="url(#gBl)"/>
<rect x="287.5" y="683.5" width="8" height="18" fill="none" stroke="#6a8ce0" stroke-width="1"/>
<rect x="296.0" y="681" width="9" height="21" fill="url(#gRe)"/>
<rect x="296.5" y="681.5" width="8" height="20" fill="none" stroke="#e86a4a" stroke-width="1"/>
<rect x="310.0" y="684" width="9" height="18" fill="url(#gBl)"/>
<rect x="310.5" y="684.5" width="8" height="17" fill="none" stroke="#6a8ce0" stroke-width="1"/>
<rect x="319.0" y="693" width="9" height="9" fill="url(#gRe)"/>
<rect x="319.5" y="693.5" width="8" height="8" fill="none" stroke="#e86a4a" stroke-width="1"/>
<rect x="333.0" y="685" width="9" height="17" fill="url(#gBl)"/>
<rect x="333.5" y="685.5" width="8" height="16" fill="none" stroke="#6a8ce0" stroke-width="1"/>
<rect x="342.0" y="678" width="9" height="24" fill="url(#gRe)"/>
<rect x="342.5" y="678.5" width="8" height="23" fill="none" stroke="#e86a4a" stroke-width="1"/>
<rect x="356.0" y="659" width="9" height="43" fill="url(#gBl)"/>
<rect x="356.5" y="659.5" width="8" height="42" fill="none" stroke="#6a8ce0" stroke-width="1"/>
<rect x="365.0" y="677" width="9" height="25" fill="url(#gRe)"/>
<rect x="365.5" y="677.5" width="8" height="24" fill="none" stroke="#e86a4a" stroke-width="1"/>
<rect x="379.0" y="583" width="9" height="119" fill="url(#gBl)"/>
<rect x="379.5" y="583.5" width="8" height="118" fill="none" stroke="#6a8ce0" stroke-width="1"/>
<rect x="388.0" y="694" width="9" height="8" fill="url(#gRe)"/>
<rect x="388.5" y="694.5" width="8" height="7" fill="none" stroke="#e86a4a" stroke-width="1"/>
<rect x="402.0" y="575" width="9" height="127" fill="url(#gBl)"/>
<rect x="402.5" y="575.5" width="8" height="126" fill="none" stroke="#6a8ce0" stroke-width="1"/>
<rect x="411.0" y="683" width="9" height="19" fill="url(#gRe)"/>
<rect x="411.5" y="683.5" width="8" height="18" fill="none" stroke="#e86a4a" stroke-width="1"/>
<rect x="425.0" y="624" width="9" height="78" fill="url(#gBl)"/>
<rect x="425.5" y="624.5" width="8" height="77" fill="none" stroke="#6a8ce0" stroke-width="1"/>
<rect x="434.0" y="677" width="9" height="25" fill="url(#gRe)"/>
<rect x="434.5" y="677.5" width="8" height="24" fill="none" stroke="#e86a4a" stroke-width="1"/>
<rect x="448.0" y="610" width="9" height="92" fill="url(#gBl)"/>
<rect x="448.5" y="610.5" width="8" height="91" fill="none" stroke="#6a8ce0" stroke-width="1"/>
<rect x="457.0" y="671" width="9" height="31" fill="url(#gRe)"/>
<rect x="457.5" y="671.5" width="8" height="30" fill="none" stroke="#e86a4a" stroke-width="1"/>
<rect x="471.0" y="636" width="9" height="66" fill="url(#gBl)"/>
<rect x="471.5" y="636.5" width="8" height="65" fill="none" stroke="#6a8ce0" stroke-width="1"/>
<rect x="480.0" y="676" width="9" height="26" fill="url(#gRe)"/>
<rect x="480.5" y="676.5" width="8" height="25" fill="none" stroke="#e86a4a" stroke-width="1"/>
<rect x="494.0" y="650" width="9" height="52" fill="url(#gBl)"/>
<rect x="494.5" y="650.5" width="8" height="51" fill="none" stroke="#6a8ce0" stroke-width="1"/>
<rect x="503.0" y="683" width="9" height="19" fill="url(#gRe)"/>
<rect x="503.5" y="683.5" width="8" height="18" fill="none" stroke="#e86a4a" stroke-width="1"/>
<rect x="517.0" y="635" width="9" height="67" fill="url(#gBl)"/>
<rect x="517.5" y="635.5" width="8" height="66" fill="none" stroke="#6a8ce0" stroke-width="1"/>
<rect x="526.0" y="694" width="9" height="8" fill="url(#gRe)"/>
<rect x="526.5" y="694.5" width="8" height="7" fill="none" stroke="#e86a4a" stroke-width="1"/>
<rect x="540.0" y="643" width="9" height="59" fill="url(#gBl)"/>
<rect x="540.5" y="643.5" width="8" height="58" fill="none" stroke="#6a8ce0" stroke-width="1"/>
<rect x="549.0" y="686" width="9" height="16" fill="url(#gRe)"/>
<rect x="549.5" y="686.5" width="8" height="15" fill="none" stroke="#e86a4a" stroke-width="1"/>
<rect x="563.0" y="659" width="9" height="43" fill="url(#gBl)"/>
<rect x="563.5" y="659.5" width="8" height="42" fill="none" stroke="#6a8ce0" stroke-width="1"/>
<rect x="572.0" y="699" width="9" height="3" fill="url(#gRe)"/>
<rect x="572.5" y="699.5" width="8" height="2" fill="none" stroke="#e86a4a" stroke-width="1"/>
<rect x="586.0" y="610" width="9" height="92" fill="url(#gBl)"/>
<rect x="586.5" y="610.5" width="8" height="91" fill="none" stroke="#6a8ce0" stroke-width="1"/>
<rect x="595.0" y="697" width="9" height="5" fill="url(#gRe)"/>
<rect x="595.5" y="697.5" width="8" height="4" fill="none" stroke="#e86a4a" stroke-width="1"/>
<line x1="686" y1="574.5" x2="1230.5" y2="574.5" stroke="#a6a6a6" stroke-width="1"/>
<line x1="686" y1="590.375" x2="1230.5" y2="590.375" stroke="#a6a6a6" stroke-width="1"/>
<line x1="686" y1="606.25" x2="1230.5" y2="606.25" stroke="#a6a6a6" stroke-width="1"/>
<line x1="686" y1="622.125" x2="1230.5" y2="622.125" stroke="#a6a6a6" stroke-width="1"/>
<line x1="686" y1="638.0" x2="1230.5" y2="638.0" stroke="#a6a6a6" stroke-width="1"/>
<line x1="686" y1="653.875" x2="1230.5" y2="653.875" stroke="#a6a6a6" stroke-width="1"/>
<line x1="686" y1="669.75" x2="1230.5" y2="669.75" stroke="#a6a6a6" stroke-width="1"/>
<line x1="686" y1="685.625" x2="1230.5" y2="685.625" stroke="#a6a6a6" stroke-width="1"/>
<line x1="686" y1="701.5" x2="1230.5" y2="701.5" stroke="#a6a6a6" stroke-width="1"/>
<line x1="691.5" y1="574" x2="691.5" y2="707" stroke="#a0a0a0" stroke-width="1"/>
<line x1="691.5" y1="701" x2="691.5" y2="707" stroke="#a0a0a0" stroke-width="1"/>
<line x1="768.5" y1="701" x2="768.5" y2="707" stroke="#a0a0a0" stroke-width="1"/>
<line x1="845.5" y1="701" x2="845.5" y2="707" stroke="#a0a0a0" stroke-width="1"/>
<line x1="922.5" y1="701" x2="922.5" y2="707" stroke="#a0a0a0" stroke-width="1"/>
<line x1="999.5" y1="701" x2="999.5" y2="707" stroke="#a0a0a0" stroke-width="1"/>
<line x1="1076.5" y1="701" x2="1076.5" y2="707" stroke="#a0a0a0" stroke-width="1"/>
<line x1="1153.5" y1="701" x2="1153.5" y2="707" stroke="#a0a0a0" stroke-width="1"/>
<text x="679" y="579" text-anchor="end" class="yl">557000</text>
<text x="679" y="611" text-anchor="end" class="yl">417750</text>
<text x="679" y="643" text-anchor="end" class="yl">278500</text>
<text x="679" y="674" text-anchor="end" class="yl">139250</text>
<text x="679" y="706" text-anchor="end" class="yl">0</text>
<text x="719.5" y="717" text-anchor="middle" class="xl">Sun</text>
<text x="796.6" y="717" text-anchor="middle" class="xl">Mon</text>
<text x="873.6" y="717" text-anchor="middle" class="xl">Tue</text>
<text x="950.7" y="717" text-anchor="middle" class="xl">Wed</text>
<text x="1027.8" y="717" text-anchor="middle" class="xl">Thu</text>
<text x="1104.9" y="717" text-anchor="middle" class="xl">Fri</text>
<text x="1181.9" y="717" text-anchor="middle" class="xl">Sat</text>
<text x="690" y="569" class="ti">Profits and losses by weekdays</text>
<rect x="710.0" y="636" width="19.5" height="66" fill="url(#gBl)"/>
<rect x="710.5" y="636.5" width="18.5" height="65" fill="none" stroke="#6a8ce0" stroke-width="1"/>
<rect x="729.5" y="670" width="19.5" height="32" fill="url(#gRe)"/>
<rect x="730.0" y="670.5" width="18.5" height="31" fill="none" stroke="#e86a4a" stroke-width="1"/>
<rect x="787.0" y="595" width="19.5" height="107" fill="url(#gBl)"/>
<rect x="787.5" y="595.5" width="18.5" height="106" fill="none" stroke="#6a8ce0" stroke-width="1"/>
<rect x="806.5" y="664" width="19.5" height="38" fill="url(#gRe)"/>
<rect x="807.0" y="664.5" width="18.5" height="37" fill="none" stroke="#e86a4a" stroke-width="1"/>
<rect x="864.0" y="574" width="19.5" height="128" fill="url(#gBl)"/>
<rect x="864.5" y="574.5" width="18.5" height="127" fill="none" stroke="#6a8ce0" stroke-width="1"/>
<rect x="883.5" y="688" width="19.5" height="14" fill="url(#gRe)"/>
<rect x="884.0" y="688.5" width="18.5" height="13" fill="none" stroke="#e86a4a" stroke-width="1"/>
<rect x="941.0" y="585" width="19.5" height="117" fill="url(#gBl)"/>
<rect x="941.5" y="585.5" width="18.5" height="116" fill="none" stroke="#6a8ce0" stroke-width="1"/>
<rect x="960.5" y="679" width="19.5" height="23" fill="url(#gRe)"/>
<rect x="961.0" y="679.5" width="18.5" height="22" fill="none" stroke="#e86a4a" stroke-width="1"/>
<rect x="1018.0" y="590" width="19.5" height="112" fill="url(#gBl)"/>
<rect x="1018.5" y="590.5" width="18.5" height="111" fill="none" stroke="#6a8ce0" stroke-width="1"/>
<rect x="1037.5" y="682" width="19.5" height="20" fill="url(#gRe)"/>
<rect x="1038.0" y="682.5" width="18.5" height="19" fill="none" stroke="#e86a4a" stroke-width="1"/>
<rect x="1095.0" y="628" width="19.5" height="74" fill="url(#gBl)"/>
<rect x="1095.5" y="628.5" width="18.5" height="73" fill="none" stroke="#6a8ce0" stroke-width="1"/>
<rect x="1114.5" y="676" width="19.5" height="26" fill="url(#gRe)"/>
<rect x="1115.0" y="676.5" width="18.5" height="25" fill="none" stroke="#e86a4a" stroke-width="1"/>
<rect x="1172.0" y="656" width="19.5" height="46" fill="url(#gBl)"/>
<rect x="1172.5" y="656.5" width="18.5" height="45" fill="none" stroke="#6a8ce0" stroke-width="1"/>
<rect x="1191.5" y="682" width="19.5" height="20" fill="url(#gRe)"/>
<rect x="1192.0" y="682.5" width="18.5" height="19" fill="none" stroke="#e86a4a" stroke-width="1"/>
<line x1="1322" y1="574.5" x2="1880" y2="574.5" stroke="#a6a6a6" stroke-width="1"/>
<line x1="1322" y1="590.375" x2="1880" y2="590.375" stroke="#a6a6a6" stroke-width="1"/>
<line x1="1322" y1="606.25" x2="1880" y2="606.25" stroke="#a6a6a6" stroke-width="1"/>
<line x1="1322" y1="622.125" x2="1880" y2="622.125" stroke="#a6a6a6" stroke-width="1"/>
<line x1="1322" y1="638.0" x2="1880" y2="638.0" stroke="#a6a6a6" stroke-width="1"/>
<line x1="1322" y1="653.875" x2="1880" y2="653.875" stroke="#a6a6a6" stroke-width="1"/>
<line x1="1322" y1="669.75" x2="1880" y2="669.75" stroke="#a6a6a6" stroke-width="1"/>
<line x1="1322" y1="685.625" x2="1880" y2="685.625" stroke="#a6a6a6" stroke-width="1"/>
<line x1="1322" y1="701.5" x2="1880" y2="701.5" stroke="#a6a6a6" stroke-width="1"/>
<line x1="1327.5" y1="574" x2="1327.5" y2="707" stroke="#a0a0a0" stroke-width="1"/>
<line x1="1327.5" y1="701" x2="1327.5" y2="707" stroke="#a0a0a0" stroke-width="1"/>
<line x1="1373.5" y1="701" x2="1373.5" y2="707" stroke="#a0a0a0" stroke-width="1"/>
<line x1="1419.5" y1="701" x2="1419.5" y2="707" stroke="#a0a0a0" stroke-width="1"/>
<line x1="1465.5" y1="701" x2="1465.5" y2="707" stroke="#a0a0a0" stroke-width="1"/>
<line x1="1511.5" y1="701" x2="1511.5" y2="707" stroke="#a0a0a0" stroke-width="1"/>
<line x1="1557.5" y1="701" x2="1557.5" y2="707" stroke="#a0a0a0" stroke-width="1"/>
<line x1="1604.5" y1="701" x2="1604.5" y2="707" stroke="#a0a0a0" stroke-width="1"/>
<line x1="1650.5" y1="701" x2="1650.5" y2="707" stroke="#a0a0a0" stroke-width="1"/>
<line x1="1696.5" y1="701" x2="1696.5" y2="707" stroke="#a0a0a0" stroke-width="1"/>
<line x1="1742.5" y1="701" x2="1742.5" y2="707" stroke="#a0a0a0" stroke-width="1"/>
<line x1="1788.5" y1="701" x2="1788.5" y2="707" stroke="#a0a0a0" stroke-width="1"/>
<line x1="1834.5" y1="701" x2="1834.5" y2="707" stroke="#a0a0a0" stroke-width="1"/>
<text x="1315" y="579" text-anchor="end" class="yl">674000</text>
<text x="1315" y="595" text-anchor="end" class="yl">589750</text>
<text x="1315" y="611" text-anchor="end" class="yl">505500</text>
<text x="1315" y="627" text-anchor="end" class="yl">421250</text>
<text x="1315" y="643" text-anchor="end" class="yl">337000</text>
<text x="1315" y="658" text-anchor="end" class="yl">252750</text>
<text x="1315" y="674" text-anchor="end" class="yl">168500</text>
<text x="1315" y="690" text-anchor="end" class="yl">84250</text>
<text x="1315" y="706" text-anchor="end" class="yl">0</text>
<text x="1346.8" y="717" text-anchor="middle" class="xl">Jan</text>
<text x="1392.9" y="717" text-anchor="middle" class="xl">Feb</text>
<text x="1439.0" y="717" text-anchor="middle" class="xl">Mar</text>
<text x="1485.0" y="717" text-anchor="middle" class="xl">Apr</text>
<text x="1531.1" y="717" text-anchor="middle" class="xl">May</text>
<text x="1577.2" y="717" text-anchor="middle" class="xl">Jun</text>
<text x="1623.3" y="717" text-anchor="middle" class="xl">Jul</text>
<text x="1669.4" y="717" text-anchor="middle" class="xl">Aug</text>
<text x="1715.5" y="717" text-anchor="middle" class="xl">Sep</text>
<text x="1761.5" y="717" text-anchor="middle" class="xl">Oct</text>
<text x="1807.6" y="717" text-anchor="middle" class="xl">Nov</text>
<text x="1853.7" y="717" text-anchor="middle" class="xl">Dec</text>
<text x="1326" y="569" class="ti">Profits and losses by months</text>
<rect x="1338.0" y="574" width="11.6" height="128" fill="url(#gBl)"/>
<rect x="1338.5" y="574.5" width="10.6" height="127" fill="none" stroke="#6a8ce0" stroke-width="1"/>
<rect x="1349.6" y="677" width="11.6" height="25" fill="url(#gRe)"/>
<rect x="1350.1" y="677.5" width="10.6" height="24" fill="none" stroke="#e86a4a" stroke-width="1"/>
<rect x="1384.1" y="700" width="11.6" height="2" fill="url(#gBl)"/>
<rect x="1384.6" y="700.5" width="10.6" height="1" fill="none" stroke="#6a8ce0" stroke-width="1"/>
<rect x="1395.7" y="701" width="11.6" height="1" fill="url(#gRe)"/>
<rect x="1395.7" y="701" width="11.6" height="1" fill="#e86a4a"/>
<rect x="1430.1" y="699" width="11.6" height="3" fill="url(#gBl)"/>
<rect x="1430.6" y="699.5" width="10.6" height="2" fill="none" stroke="#6a8ce0" stroke-width="1"/>
<rect x="1441.7" y="700" width="11.6" height="2" fill="url(#gRe)"/>
<rect x="1442.2" y="700.5" width="10.6" height="1" fill="none" stroke="#e86a4a" stroke-width="1"/>
<rect x="1476.2" y="697" width="11.6" height="5" fill="url(#gBl)"/>
<rect x="1476.7" y="697.5" width="10.6" height="4" fill="none" stroke="#6a8ce0" stroke-width="1"/>
<rect x="1487.8" y="700" width="11.6" height="2" fill="url(#gRe)"/>
<rect x="1488.3" y="700.5" width="10.6" height="1" fill="none" stroke="#e86a4a" stroke-width="1"/>
<rect x="1522.2" y="693" width="11.6" height="9" fill="url(#gBl)"/>
<rect x="1522.7" y="693.5" width="10.6" height="8" fill="none" stroke="#6a8ce0" stroke-width="1"/>
<rect x="1533.8" y="699" width="11.6" height="3" fill="url(#gRe)"/>
<rect x="1534.3" y="699.5" width="10.6" height="2" fill="none" stroke="#e86a4a" stroke-width="1"/>
<rect x="1568.3" y="682" width="11.6" height="20" fill="url(#gBl)"/>
<rect x="1568.8" y="682.5" width="10.6" height="19" fill="none" stroke="#6a8ce0" stroke-width="1"/>
<rect x="1579.9" y="698" width="11.6" height="4" fill="url(#gRe)"/>
<rect x="1580.4" y="698.5" width="10.6" height="3" fill="none" stroke="#e86a4a" stroke-width="1"/>
<rect x="1614.4" y="677" width="11.6" height="25" fill="url(#gBl)"/>
<rect x="1614.9" y="677.5" width="10.6" height="24" fill="none" stroke="#6a8ce0" stroke-width="1"/>
<rect x="1626.0" y="696" width="11.6" height="6" fill="url(#gRe)"/>
<rect x="1626.5" y="696.5" width="10.6" height="5" fill="none" stroke="#e86a4a" stroke-width="1"/>
<rect x="1660.4" y="665" width="11.6" height="37" fill="url(#gBl)"/>
<rect x="1660.9" y="665.5" width="10.6" height="36" fill="none" stroke="#6a8ce0" stroke-width="1"/>
<rect x="1672.0" y="689" width="11.6" height="13" fill="url(#gRe)"/>
<rect x="1672.5" y="689.5" width="10.6" height="12" fill="none" stroke="#e86a4a" stroke-width="1"/>
<rect x="1706.5" y="646" width="11.6" height="56" fill="url(#gBl)"/>
<rect x="1707.0" y="646.5" width="10.6" height="55" fill="none" stroke="#6a8ce0" stroke-width="1"/>
<rect x="1718.1" y="680" width="11.6" height="22" fill="url(#gRe)"/>
<rect x="1718.6" y="680.5" width="10.6" height="21" fill="none" stroke="#e86a4a" stroke-width="1"/>
<rect x="1752.5" y="643" width="11.6" height="59" fill="url(#gBl)"/>
<rect x="1753.0" y="643.5" width="10.6" height="58" fill="none" stroke="#6a8ce0" stroke-width="1"/>
<rect x="1764.1" y="673" width="11.6" height="29" fill="url(#gRe)"/>
<rect x="1764.6" y="673.5" width="10.6" height="28" fill="none" stroke="#e86a4a" stroke-width="1"/>
<rect x="1798.6" y="604" width="11.6" height="98" fill="url(#gBl)"/>
<rect x="1799.1" y="604.5" width="10.6" height="97" fill="none" stroke="#6a8ce0" stroke-width="1"/>
<rect x="1810.2" y="682" width="11.6" height="20" fill="url(#gRe)"/>
<rect x="1810.7" y="682.5" width="10.6" height="19" fill="none" stroke="#e86a4a" stroke-width="1"/>
<rect x="1844.7" y="600" width="11.6" height="102" fill="url(#gBl)"/>
<rect x="1845.2" y="600.5" width="10.6" height="101" fill="none" stroke="#6a8ce0" stroke-width="1"/>
<rect x="1856.3" y="681" width="11.6" height="21" fill="url(#gRe)"/>
<rect x="1856.8" y="681.5" width="10.6" height="20" fill="none" stroke="#e86a4a" stroke-width="1"/>
</svg>
<svg class="a" style="left:0;top:0" width="1907" height="726">
<g opacity="0.96">
<path fill="#0b3d7b" d="M28.6,632.7 L32.2,628 L36.5,621.6 L41.5,617.3 L45.8,614.4 L53,613.4 L60.1,614.8 L70,617.3 L77.8,616.6 L85.1,620.5 L90.2,627.2 L82,630 L72,632.5 L64,634 L58,636.5 L53.5,640 L49.5,645 L46.5,650.5 L44.5,656 L43.2,654 L43,649 L44.6,642.5 L46.5,637 L45.3,635 L43.6,634.3 L34.3,634.2 Z"/>
<path fill="#0b3d7b" d="M48,668.5 L52.6,656.8 L56.4,650.5 L60.2,647 L61.3,655.3 L66.2,654 L79.8,647 L80.6,650 L105.6,634.1 L107.8,635.5 L111.7,631 L114.5,636.5 L117,641.7 L122,642 L127,642.3 L131.4,643 L130,644.8 L126,646 L121,647.5 L123,652 L123.8,658.3 L121.5,663 L117.5,662 L112,659.5 L107.9,657.6 L105.6,659.8 L110,668 L80,667.5 Z"/>
<path fill="#fff" d="M76.5,654.5 L79,657 L80.6,663.8 L73.8,663.8 L73.5,658 Z"/>
<ellipse cx="95.3" cy="663.6" rx="4" ry="1.3" fill="#fff"/>
<path fill="#6b9e38" d="M45,659 L47,650 L50,645 L54,640.5 L58,637.5 L64,635 L72,633.5 L82,631 L92,627.5 L100,625 L104,624.3 L107.5,625.2 L110.5,628.8 L111.5,631 L107.8,635.5 L105.6,634.1 L80.6,650 L79.8,646.8 L66.2,654 L61.3,655.3 L60.2,644.8 L57.5,643.2 L55,644.5 L51,649 L48,654 L46.2,659.5 Z"/>
<path fill="none" stroke="#fff" stroke-width="0.9" d="M62,655 L109,630"/><path fill="none" stroke="#fff" stroke-width="0.9" d="M44.6,658 L46.6,650 L49.6,644.8 L53.6,640.3 L57.8,637.2 L64,634.6 L72,633 L82,630.4 L92,627"/>
<path fill="#fff" d="M111,628.6 L104.8,629.2 L109.2,633.6 Z"/>
<path fill="#0b3d7b" d="M21.5,674.2 Q75,657.3 138,674.5 Q75,664.6 21.5,674.2 Z"/>
<g fill="none" stroke="#0b3d7b" stroke-width="3.2">
<path d="M13.5,700 L13.5,682.6 L21.8,682.6 M13.5,690.4 L20,690.4"/>
<ellipse cx="33" cy="690.3" rx="8.5" ry="8.9"/>
<path d="M45.9,700 L45.9,682.6 L51,682.6 Q55.3,682.6 55.3,687.3 Q55.3,692 51,692 L45.9,692 M50.5,692 L55.9,700"/>
<path d="M67.2,682.6 L58.8,682.6 L58.8,698.4 L67.2,698.4 M58.8,690.4 L66.5,690.4"/>
</g>
<g fill="none" stroke="#0b3d7b" stroke-width="4.6">
<path stroke-linejoin="bevel" d="M102.3,681 L107.5,699 L112.6,685 L117.7,699 L122.9,681"/>
<path d="M129.4,681 L129.4,700 M142.8,681 L132,691 L143,700"/>
</g>
<rect x="146.2" y="681" width="3" height="19" fill="#0b3d7b"/>
<path fill="#0b3d7b" d="M92,675 L98.5,675 L84.3,692.5 L89.5,700 L83.3,700 L78.8,693 Z"/>
<path fill="#6b9e38" d="M70.3,681.8 L76.3,681.8 L83.8,692 L78.5,697 L76,697 L79,692 Z"/>
<path fill="#6b9e38" d="M76.5,697 L81.8,696.5 L69,709.3 L63.5,709.3 Z"/>
<text x="0" y="0" font-family="Liberation Sans, sans-serif" font-weight="bold" font-size="13" fill="#6b9e38" stroke="#6b9e38" stroke-width="0.7" textLength="71" lengthAdjust="spacingAndGlyphs" transform="translate(78,712.5)">TRADING</text>
</g>
<g opacity="0.64"><text x="0" y="0" font-family="Liberation Sans, sans-serif" font-weight="bold" font-size="30" fill="#de2a2a" stroke="#de2a2a" stroke-width="2.2" stroke-linejoin="round" transform="translate(829,714.3) scale(0.836,1.06)">ForexWikiTrading.com</text></g>
</svg>
</body></html>
